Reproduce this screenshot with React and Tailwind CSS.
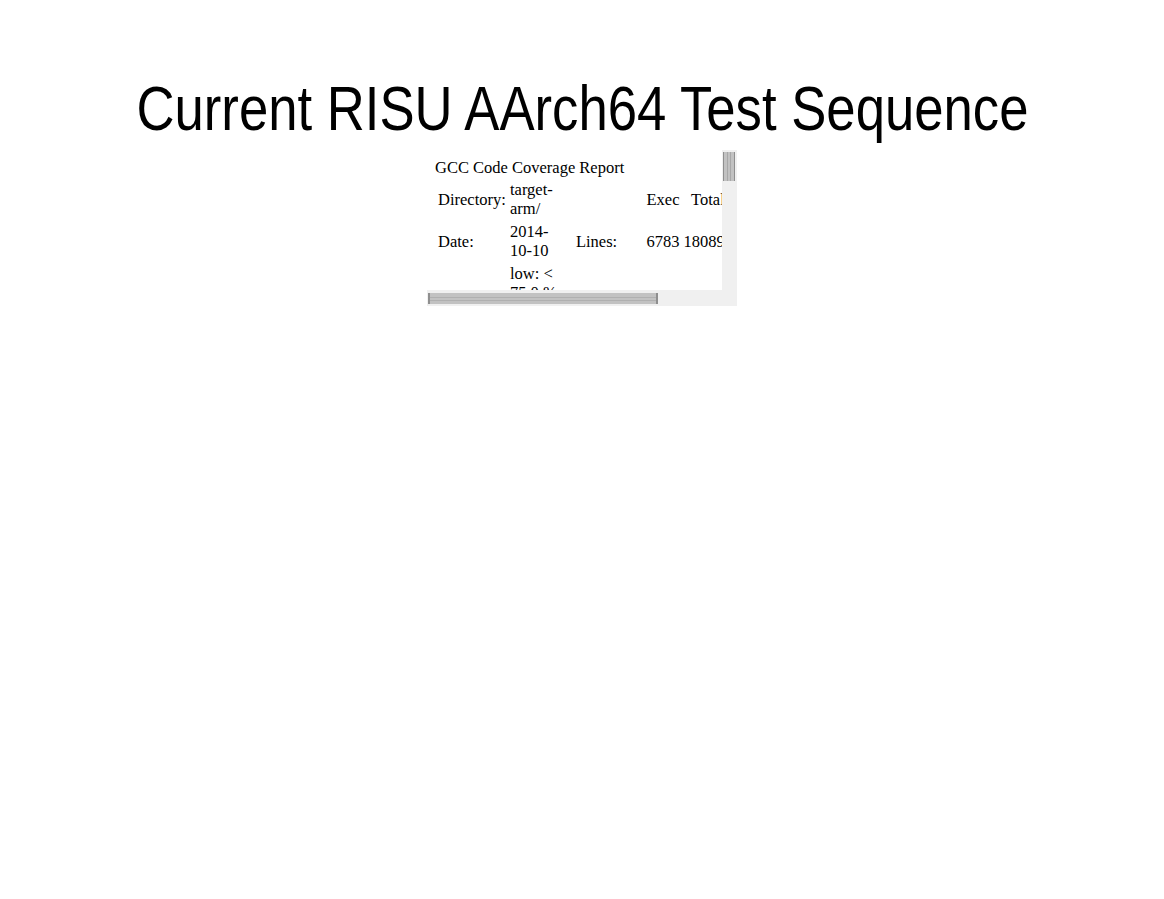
export default function App() {
  return (
    <div className="min-h-[899px] w-full bg-white flex flex-col items-center">
      <h1 className="mt-[72px] text-[63px] leading-[72px] text-black font-normal whitespace-nowrap scale-x-[0.836] [font-family:'Liberation_Sans',Arial,sans-serif]">
        Current RISU AArch64 Test Sequence
      </h1>
      <div className="mt-[6px] w-[310px] h-[156px] grid grid-cols-[295px_15px] grid-rows-[140px_16px] bg-white">
        <div className="overflow-hidden [font-family:'Liberation_Serif',serif] text-[16.5px] leading-[19px] text-black">
          <div className="m-[8px] mb-0 w-[360px]">
            <div className="whitespace-nowrap">GCC Code Coverage Report</div>
            <table className="border-separate border-spacing-[2px]">
              <tbody>
                <tr>
                  <td className="p-[1px] align-middle w-[70px]">Directory:</td>
                  <td className="p-[1px] align-middle w-[65px]">target-<br />arm/</td>
                  <td className="p-[1px] align-middle w-[69px]"></td>
                  <td className="p-[1px] align-middle w-[36px] text-right">Exec</td>
                  <td className="p-[1px] align-middle w-[43px] text-right">Total</td>
                  <td className="p-[1px] align-middle w-[62px] text-right">Coverage</td>
                </tr>
                <tr>
                  <td className="p-[1px] align-middle">Date:</td>
                  <td className="p-[1px] align-middle">2014-<br />10-10</td>
                  <td className="p-[1px] align-middle">Lines:</td>
                  <td className="p-[1px] align-middle text-right">6783</td>
                  <td className="p-[1px] align-middle text-right">18089</td>
                  <td className="p-[1px] align-middle text-right">37.5 %</td>
                </tr>
                <tr>
                  <td className="p-[1px] align-middle"></td>
                  <td className="p-[1px] align-middle">low: &lt;<br />75.0 %</td>
                  <td className="p-[1px]"></td>
                  <td className="p-[1px]"></td>
                  <td className="p-[1px]"></td>
                  <td className="p-[1px]"></td>
                </tr>
              </tbody>
            </table>
          </div>
        </div>
        <div className="row-span-2 bg-[#f0f0f0] pt-[2px] pl-[1px] pr-[2px]">
          <div className="h-[29px] w-[12px] bg-[#c2c2c2] border-x border-[#8f8f8f] flex justify-center gap-[2px]">
            <div className="w-px bg-[#a8a8a8]" />
            <div className="w-px bg-[#a8a8a8]" />
          </div>
        </div>
        <div className="bg-[#f0f0f0] pt-[3px] pl-[1px]">
          <div className="h-[11px] w-[230px] bg-[#c2c2c2] border-x-2 border-[#8f8f8f] flex flex-col justify-center gap-[2px]">
            <div className="h-px bg-[#b0b0b0]" />
            <div className="h-px bg-[#b0b0b0]" />
          </div>
        </div>
      </div>
    </div>
  );
}
